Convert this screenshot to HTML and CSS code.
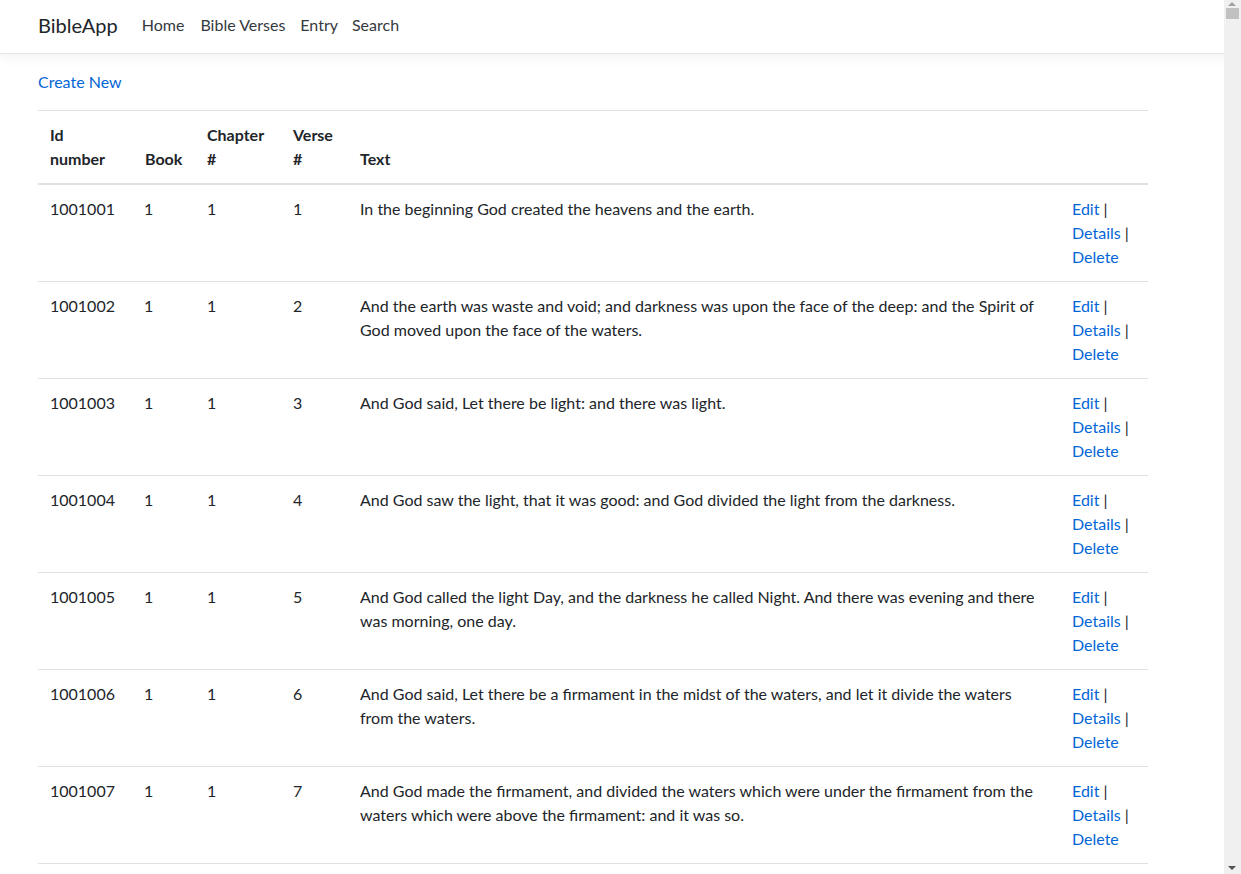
FILE: index.html
```html
<!DOCTYPE html>
<html lang="en">
<head>
    <meta charset="UTF-8">
    <title>Index - BibleApp</title>
    <link rel="stylesheet" href="styles.css">
</head>
<body>

<header>
    <nav class="navbar">
        <a class="brand" href="#">BibleApp</a>
        <ul class="nav">
            <li><a class="nav-link" href="#">Home</a></li>
            <li><a class="nav-link" href="#">Bible Verses</a></li>
            <li><a class="nav-link" href="#">Entry</a></li>
            <li><a class="nav-link" href="#">Search</a></li>
        </ul>
    </nav>
</header>

<div class="container">
    <main>
        <p class="create"><a href="#">Create New</a></p>

        <table class="table">
            <colgroup>
                <col class="c-id">
                <col class="c-book">
                <col class="c-chap">
                <col class="c-verse">
                <col class="c-text">
                <col class="c-act">
            </colgroup>
            <thead>
                <tr>
                    <th>Id number</th>
                    <th>Book</th>
                    <th>Chapter #</th>
                    <th>Verse #</th>
                    <th>Text</th>
                    <th></th>
                </tr>
            </thead>
            <tbody>
                <tr>
                    <td>1001001</td><td>1</td><td>1</td><td>1</td>
                    <td>In the beginning God created the heavens and the earth.</td>
                    <td><a href="#">Edit</a> |<br><a href="#">Details</a> |<br><a href="#">Delete</a></td>
                </tr>
                <tr>
                    <td>1001002</td><td>1</td><td>1</td><td>2</td>
                    <td>And the earth was waste and void; and darkness was upon the face of the deep: and the Spirit of God moved upon the face of the waters.</td>
                    <td><a href="#">Edit</a> |<br><a href="#">Details</a> |<br><a href="#">Delete</a></td>
                </tr>
                <tr>
                    <td>1001003</td><td>1</td><td>1</td><td>3</td>
                    <td>And God said, Let there be light: and there was light.</td>
                    <td><a href="#">Edit</a> |<br><a href="#">Details</a> |<br><a href="#">Delete</a></td>
                </tr>
                <tr>
                    <td>1001004</td><td>1</td><td>1</td><td>4</td>
                    <td>And God saw the light, that it was good: and God divided the light from the darkness.</td>
                    <td><a href="#">Edit</a> |<br><a href="#">Details</a> |<br><a href="#">Delete</a></td>
                </tr>
                <tr>
                    <td>1001005</td><td>1</td><td>1</td><td>5</td>
                    <td>And God called the light Day, and the darkness he called Night. And there was evening and there was morning, one day.</td>
                    <td><a href="#">Edit</a> |<br><a href="#">Details</a> |<br><a href="#">Delete</a></td>
                </tr>
                <tr>
                    <td>1001006</td><td>1</td><td>1</td><td>6</td>
                    <td>And God said, Let there be a firmament in the midst of the waters, and let it divide the waters from the waters.</td>
                    <td><a href="#">Edit</a> |<br><a href="#">Details</a> |<br><a href="#">Delete</a></td>
                </tr>
                <tr>
                    <td>1001007</td><td>1</td><td>1</td><td>7</td>
                    <td>And God made the firmament, and divided the waters which were under the firmament from the waters which were above the firmament: and it was so.</td>
                    <td><a href="#">Edit</a> |<br><a href="#">Details</a> |<br><a href="#">Delete</a></td>
                </tr>
            </tbody>
        </table>
    </main>
</div>

<!-- scrollbar as it shows in the screenshot -->
<div class="scrollbar">
    <span class="arrow-up"></span>
    <span class="thumb"></span>
    <span class="arrow-down"></span>
</div>

</body>
</html>
```

FILE: styles.css
```css
html {
    font-size: 16px;
}

body {
    margin: 0 0 60px 0;
    font-family: "Segoe UI", Lato, "Liberation Sans", sans-serif;
    font-size: 16px;
    line-height: 1.5;
    color: #212529;
    background-color: #fff;
}

a {
    color: #0366d6;
    text-decoration: none;
}

.navbar {
    display: flex;
    align-items: center;
    box-sizing: border-box;
    height: 54px;
    padding: 0 38px 4px 38px;
    background-color: #fff;
    border-bottom: 1px solid #e5e5e5;
    box-shadow: 0 4px 12px rgba(0, 0, 0, 0.05);
    margin-bottom: 16px;
}

.brand {
    font-size: 20px;
    line-height: 30px;
    color: #212529;
    margin-right: 16px;
}

.nav {
    display: flex;
    list-style: none;
    margin: 0;
    padding: 0;
}

.nav-link {
    display: block;
    padding: 8px 8px 8px 8px;
    color: #343a40;
}

.nav li:nth-child(n+3) .nav-link {
    padding: 8px 7px;
}

.container {
    padding: 0 38px;
}

.create {
    margin: 0 0 16px 0;
}

.table {
    width: 1110px;
    border-collapse: collapse;
    table-layout: fixed;
}

.c-id { width: 95px; }
.c-book { width: 62px; }
.c-chap { width: 86px; }
.c-verse { width: 67px; }
.c-text { width: 712px; }
.c-act { width: 88px; }

.table th,
.table td {
    padding: 12px;
    text-align: left;
    vertical-align: top;
    border-top: 1px solid #dee2e6;
    border-bottom: 1px solid #dee2e6;
}

.table td:nth-child(2) {
    padding-left: 11px;
}

.table thead th {
    vertical-align: bottom;
    font-weight: bold;
    border-bottom: 2px solid #dee2e6;
}

.scrollbar {
    position: fixed;
    top: 0;
    right: 0;
    bottom: 0;
    width: 17px;
    background-color: #f0f0f0;
}

.arrow-up,
.arrow-down {
    position: absolute;
    left: 4px;
    width: 0;
    height: 0;
    border-left: 4px solid transparent;
    border-right: 4px solid transparent;
}

.arrow-up {
    top: 2px;
    border-bottom: 4px solid #a3a3a3;
}

.arrow-down {
    bottom: 4px;
    border-top: 4px solid #505050;
}

.thumb {
    position: absolute;
    top: 8px;
    left: 2px;
    width: 13px;
    height: 11px;
    background-color: #c1c1c1;
}
```
